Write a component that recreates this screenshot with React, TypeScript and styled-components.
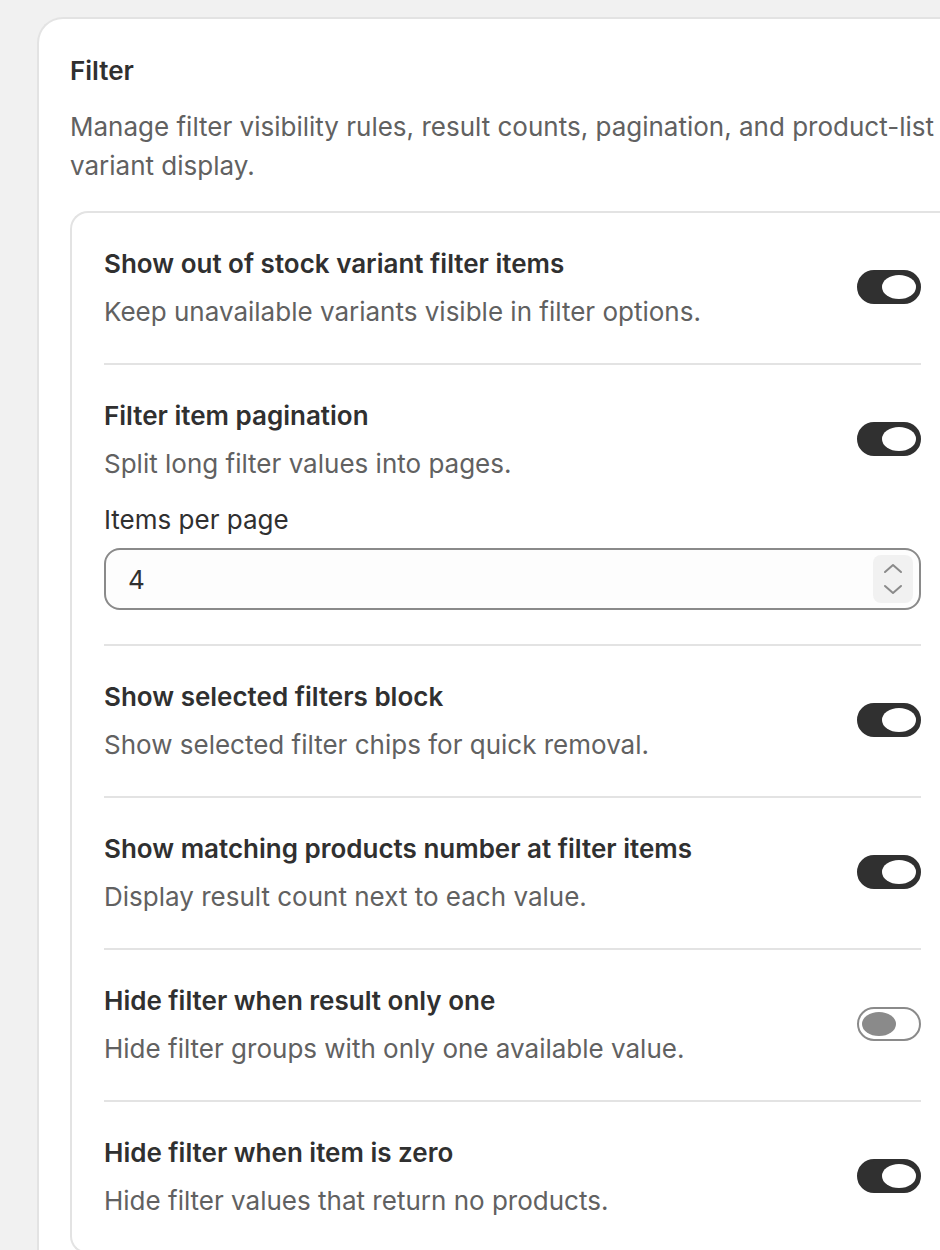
import styled, { createGlobalStyle } from "styled-components";

const GlobalStyle = createGlobalStyle`
  html, body {
    margin: 0;
    padding: 0;
    background: #f1f1f1;
    overflow: hidden;
  }
  body {
    font-family: Inter, "Noto Sans", sans-serif;
    color: #303030;
  }
`;

const Page = styled.div`
  padding: 17px 0 0 37px;
  width: 1000px;
`;

const Card = styled.section`
  width: 950px;
  background: #ffffff;
  border: 2px solid #e3e3e3;
  border-right: none;
  border-radius: 26px 0 0 26px;
  padding: 33px 0 40px 31px;
  box-sizing: border-box;
`;

const CardTitle = styled.h2`
  margin: 0;
  font-size: 26px;
  font-weight: 600;
  line-height: 38px;
`;

const CardText = styled.p`
  margin: 17px 0 26px;
  font-size: 26px;
  line-height: 39px;
  color: #616161;
  width: 900px;
`;

const Panel = styled.div`
  border: 2px solid #e3e3e3;
  border-right: none;
  border-radius: 18px 0 0 18px;
  padding: 0 0 0 32px;
  width: 884px;
  box-sizing: border-box;
`;

const Row = styled.div<{ $last?: boolean }>`
  display: flex;
  align-items: flex-start;
  gap: 24px;
  padding: 34px 0 34px;
  width: 817px;
  border-bottom: ${(p) => (p.$last ? "none" : "2px solid #e3e3e3")};
`;

const RowBody = styled.div`
  flex: 1;
  min-width: 0;
`;

const RowTitle = styled.div`
  font-size: 26px;
  font-weight: 600;
  line-height: 34px;
`;

const RowText = styled.div`
  margin-top: 14px;
  font-size: 26px;
  line-height: 34px;
  color: #616161;
`;

const Switch = styled.button<{ $on: boolean }>`
  flex: none;
  margin-top: 23px;
  width: 64px;
  height: 34px;
  border-radius: 17px;
  border: 2px solid ${(p) => (p.$on ? "#303030" : "#8a8a8a")};
  background: ${(p) => (p.$on ? "#303030" : "#ffffff")};
  padding: 0 3px;
  display: flex;
  align-items: center;
  justify-content: ${(p) => (p.$on ? "flex-end" : "flex-start")};
  box-sizing: border-box;
  cursor: pointer;
`;

const Thumb = styled.span<{ $on: boolean }>`
  width: 34px;
  height: 24px;
  border-radius: 50%;
  background: ${(p) => (p.$on ? "#ffffff" : "#8a8a8a")};
`;

const FieldLabel = styled.div`
  margin-top: 22px;
  font-size: 26px;
  line-height: 34px;
  color: #303030;
`;

const Field = styled.div`
  margin-top: 11px;
  width: 817px;
  height: 62px;
  border: 2px solid #8a8a8a;
  border-radius: 16px;
  background: #fdfdfd;
  box-sizing: border-box;
  display: flex;
  align-items: center;
  padding: 0 6px 0 22px;
`;

const FieldValue = styled.span`
  flex: 1;
  font-size: 26px;
  color: #303030;
`;

const Stepper = styled.div`
  width: 40px;
  height: 48px;
  border-radius: 8px;
  background: #f1f1f1;
  display: flex;
  flex-direction: column;
  align-items: center;
  justify-content: center;
  gap: 10px;
`;

type Item = { title: string; text: string; on: boolean; field?: boolean };

const items: Item[] = [
  {
    title: "Show out of stock variant filter items",
    text: "Keep unavailable variants visible in filter options.",
    on: true,
  },
  {
    title: "Filter item pagination",
    text: "Split long filter values into pages.",
    on: true,
    field: true,
  },
  {
    title: "Show selected filters block",
    text: "Show selected filter chips for quick removal.",
    on: true,
  },
  {
    title: "Show matching products number at filter items",
    text: "Display result count next to each value.",
    on: true,
  },
  {
    title: "Hide filter when result only one",
    text: "Hide filter groups with only one available value.",
    on: false,
  },
  {
    title: "Hide filter when item is zero",
    text: "Hide filter values that return no products.",
    on: true,
  },
];

function Chevron({ up }: { up?: boolean }) {
  return (
    <svg width="22" height="12" viewBox="0 0 22 12" fill="none">
      <path
        d={up ? "M3 10 L11 3 L19 10" : "M3 2 L11 9 L19 2"}
        stroke="#8a8a8a"
        strokeWidth="2"
        strokeLinecap="round"
        strokeLinejoin="round"
      />
    </svg>
  );
}

export default function App() {
  return (
    <>
      <GlobalStyle />
      <Page>
        <Card>
          <CardTitle>Filter</CardTitle>
          <CardText>
            Manage filter visibility rules, result counts, pagination, and
            product-list variant display.
          </CardText>
          <Panel>
            {items.map((it, i) => (
              <Row key={it.title} $last={i === items.length - 1}>
                <RowBody>
                  <RowTitle>{it.title}</RowTitle>
                  <RowText>{it.text}</RowText>
                  {it.field && (
                    <>
                      <FieldLabel>Items per page</FieldLabel>
                      <Field>
                        <FieldValue>4</FieldValue>
                        <Stepper>
                          <Chevron up />
                          <Chevron />
                        </Stepper>
                      </Field>
                    </>
                  )}
                </RowBody>
                <Switch $on={it.on} aria-pressed={it.on}>
                  <Thumb $on={it.on} />
                </Switch>
              </Row>
            ))}
          </Panel>
        </Card>
      </Page>
    </>
  );
}
